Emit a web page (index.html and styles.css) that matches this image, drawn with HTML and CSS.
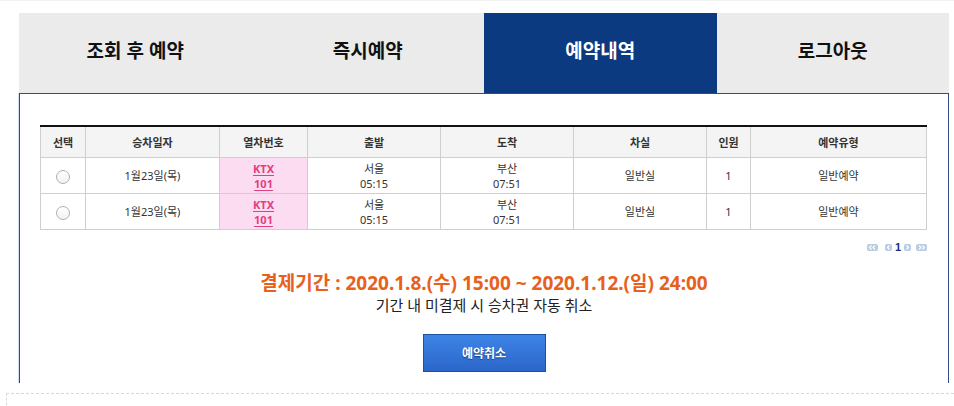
FILE: index.html
```html
<!DOCTYPE html>
<html lang="ko">
<head>
<meta charset="utf-8">
<title>예약내역</title>
<link rel="stylesheet" href="styles.css">
</head>
<body>
<div class="page">
  <nav class="tabs">
    <a class="tab">조회 후 예약</a>
    <a class="tab">즉시예약</a>
    <a class="tab active">예약내역</a>
    <a class="tab">로그아웃</a>
  </nav>
  <section class="panel">
    <table class="list">
      <colgroup>
        <col style="width:45px"><col style="width:134px"><col style="width:88px"><col style="width:133px"><col style="width:133px"><col style="width:133px"><col style="width:44px"><col>
      </colgroup>
      <thead>
        <tr><th>선택</th><th>승차일자</th><th>열차번호</th><th>출발</th><th>도착</th><th>차실</th><th>인원</th><th>예약유형</th></tr>
      </thead>
      <tbody>
        <tr>
          <td><span class="radio"></span></td>
          <td>1월23일(목)</td>
          <td class="train"><a>KTX<br>101</a></td>
          <td>서울<br>05:15</td>
          <td>부산<br>07:51</td>
          <td>일반실</td>
          <td>1</td>
          <td>일반예약</td>
        </tr>
        <tr>
          <td><span class="radio"></span></td>
          <td>1월23일(목)</td>
          <td class="train"><a>KTX<br>101</a></td>
          <td>서울<br>05:15</td>
          <td>부산<br>07:51</td>
          <td>일반실</td>
          <td>1</td>
          <td>일반예약</td>
        </tr>
      </tbody>
    </table>
    <div class="paging">
      <span class="pbtn wide"><svg width="11" height="7" viewBox="0 0 11 7"><path d="M4.5 1.5 2.5 3.5 4.5 5.5M8 1.5 6 3.5 8 5.5" fill="none" stroke="#fff" stroke-width="1.2"/></svg></span>
      <span class="pbtn"><svg width="7" height="7" viewBox="0 0 7 7"><path d="M4.5 1.5 2.5 3.5 4.5 5.5" fill="none" stroke="#fff" stroke-width="1.2"/></svg></span>
      <span class="pnum">1</span>
      <span class="pbtn"><svg width="7" height="7" viewBox="0 0 7 7"><path d="M2.5 1.5 4.5 3.5 2.5 5.5" fill="none" stroke="#fff" stroke-width="1.2"/></svg></span>
      <span class="pbtn wide"><svg width="11" height="7" viewBox="0 0 11 7"><path d="M3 1.5 5 3.5 3 5.5M6.5 1.5 8.5 3.5 6.5 5.5" fill="none" stroke="#fff" stroke-width="1.2"/></svg></span>
    </div>
    <p class="period">결제기간 : 2020.1.8.(수) 15:00 ~ 2020.1.12.(일) 24:00</p>
    <p class="note">기간 내 미결제 시 승차권 자동 취소</p>
    <div class="actions"><button class="btn">예약취소</button></div>
  </section>
  <div class="next"></div>
</div>
</body>
</html>
```
FILE: styles.css
```css
html, body {
  margin: 0;
  padding: 0;
  background: #fff;
}
body {
  font-family: "Noto Sans", "Noto Sans CJK KR", sans-serif;
  color: #333;
  overflow: hidden;
}
.page {
  border-top: 1px solid #f3f3f3;
  padding-top: 12px;
}
.tabs {
  display: flex;
  margin-left: 19px;
  width: 930px;
  height: 80px;
}
.tab {
  flex: 1;
  display: flex;
  align-items: center;
  justify-content: center;
  background: #ebebeb;
  color: #111;
  font-size: 19px;
  font-weight: bold;
  padding-bottom: 7px;
  box-sizing: border-box;
}
.tab.active {
  background: #0b3a80;
  color: #fff;
}
.panel {
  margin-left: 19px;
  width: 930px;
  box-sizing: border-box;
  border: 1px solid #2f4d7e;
  border-bottom: none;
  box-shadow: -1px 0 0 #cfe0f5;
  height: 290px;
  padding: 31px 20px 0 20px;
}
.list {
  width: 887px;
  border-collapse: collapse;
  table-layout: fixed;
  font-size: 11px;
  text-align: center;
  border-top: 2px solid #111;
}
.list th, .list td {
  border: 1px solid #cfcfcf;
  padding: 0;
  line-height: 15px;
}
.list th {
  background: #f4f4f4;
  font-weight: bold;
  color: #333;
  height: 30px;
}
.list td {
  height: 35px;
  color: #333;
}
.list td.train {
  background: #fcdcf1;
}
.train a {
  color: #e0407e;
  font-weight: bold;
  text-decoration: underline;
  text-underline-offset: 2px;
}
.radio {
  display: inline-block;
  width: 12px;
  height: 12px;
  border: 1px solid #b0b0b0;
  border-radius: 50%;
  background: linear-gradient(#fff, #f2f2f2);
  vertical-align: middle;
  margin-top: 1px;
}
.paging {
  display: flex;
  justify-content: flex-end;
  align-items: center;
  gap: 3px;
  width: 887px;
  margin-top: 13px;
  height: 9px;
}
.pbtn {
  display: inline-flex;
  width: 7px;
  height: 7px;
  background: #b9cde2;
  border-radius: 2px;
}
.pbtn.wide {
  width: 11px;
}
.pbtn.wide:first-child {
  margin-right: 4px;
}
.pbtn.wide:last-child {
  margin-left: 2px;
}
.pnum {
  font-size: 11px;
  font-weight: bold;
  color: #1b2f7a;
  line-height: 9px;
  font-family: "Liberation Sans", sans-serif;
}
.period {
  margin: 19px 0 0;
  text-align: center;
  font-size: 19px;
  font-weight: bold;
  color: #e8611c;
  line-height: 25px;
}
.note {
  margin: 0;
  text-align: center;
  font-size: 15px;
  color: #222;
  line-height: 18px;
}
.actions {
  display: flex;
  justify-content: center;
  margin-top: 20px;
}
.btn {
  width: 123px;
  height: 38px;
  border: 1px solid #1f4f9e;
  background: linear-gradient(#3d84e6, #2b66c9);
  color: #fff;
  font-family: inherit;
  font-size: 12px;
  font-weight: bold;
  text-shadow: 0 1px 1px #1a3d7a;
  padding: 0;
}
.next {
  margin: 10px 0 0 6px;
  height: 30px;
  border-top: 1px dashed #d9d9d9;
  border-left: 1px dashed #d9d9d9;
}
```
